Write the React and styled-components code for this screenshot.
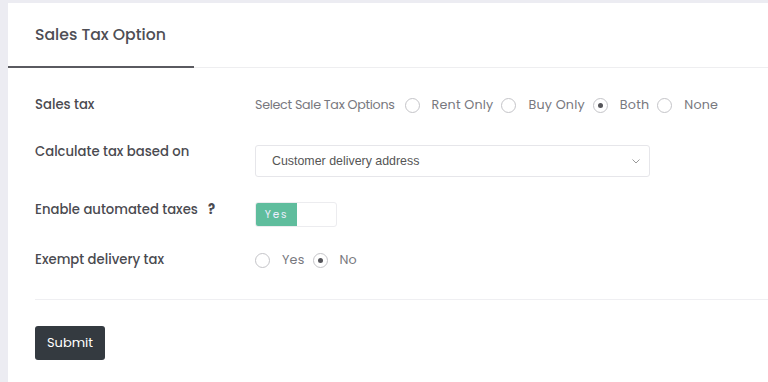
import React from "react";
import styled, { createGlobalStyle } from "styled-components";

const Global = createGlobalStyle`
  html, body { margin: 0; padding: 0; background: #ececf2; }
  body { font-family: "Poppins", "Lato", "Noto Sans", sans-serif; }
  * { box-sizing: border-box; }
`;

const Page = styled.div`
  padding: 3px 0 0 8px;
  height: 382px;
  overflow: hidden;
`;

const Card = styled.div`
  background: #fff;
  height: 379px;
`;

const Header = styled.div`
  height: 65px;
  border-bottom: 1px solid #eeeef0;
  display: flex;
  align-items: flex-end;
`;

const Tab = styled.div`
  width: 186px;
  height: 65px;
  padding-left: 27px;
  display: flex;
  align-items: center;
  border-bottom: 2px solid #5a5a60;
  margin-bottom: -1px;
  font-size: 15.7px;
  font-weight: 500;
  color: #4e4e55;
`;

const Body = styled.div`
  padding: 27px 0 0 27px;
`;

const Row = styled.div`
  display: flex;
  align-items: flex-start;
  margin-bottom: ${(p) => p.$gap}px;
`;

const Label = styled.div`
  width: 220px;
  flex-shrink: 0;
  font-size: 13.2px;
  font-weight: 500;
  line-height: 20px;
  color: #4a4a50;
  display: flex;
  align-items: center;
`;

const Help = styled.span`
  font-weight: 700;
  margin-left: 10px;
  color: #4a4a50;
`;

const Options = styled.div`
  display: flex;
  align-items: center;
  height: 20px;
  font-size: 12.7px;
  letter-spacing: 0.2px;
  color: #78787e;
`;

const Hint = styled.span`
  letter-spacing: -0.3px;
  margin-right: 10px;
`;

const Option = styled.label`
  display: flex;
  align-items: center;
  margin-right: 8px;
`;

const Circle = styled.span`
  width: 15px;
  height: 15px;
  border-radius: 50%;
  border: 1px solid #c4c4c8;
  display: inline-flex;
  align-items: center;
  justify-content: center;
  margin-right: 12px;
  &::after {
    content: "";
    width: 5px;
    height: 5px;
    border-radius: 50%;
    background: ${(p) => (p.$on ? "#55555a" : "transparent")};
  }
`;

const Select = styled.div`
  margin-top: 3px;
  width: 395px;
  height: 32px;
  border: 1px solid #e6e6ea;
  border-radius: 3px;
  display: flex;
  align-items: center;
  justify-content: space-between;
  padding: 0 9px 0 16px;
  font-family: "Liberation Sans", Arial, sans-serif;
  font-size: 12.4px;
  color: #555;
`;

const Toggle = styled.div`
  margin-top: 2px;
  width: 82px;
  height: 25px;
  border: 1px solid #ececef;
  border-radius: 3px;
  display: flex;
  overflow: hidden;
`;

const ToggleOn = styled.div`
  width: 41px;
  background: #5fbd9d;
  color: #eef;
  font-size: 10.5px;
  letter-spacing: 1.8px;
  display: flex;
  align-items: center;
  justify-content: center;
`;

const Divider = styled.div`
  margin-top: 29px;
  border-top: 1px solid #efeff2;
`;

const Submit = styled.button`
  margin-top: 26px;
  width: 70px;
  height: 34px;
  border: none;
  border-radius: 3px;
  background: #343a40;
  color: #fff;
  font-family: inherit;
  font-size: 13px;
  padding: 0;
`;

const Radio = ({ on, children }) => (
  <Option>
    <Circle $on={on} />
    {children}
  </Option>
);

export default function App() {
  return (
    <>
      <Global />
      <Page>
        <Card>
          <Header>
            <Tab>Sales Tax Option</Tab>
          </Header>
          <Body>
            <Row $gap={27}>
              <Label>Sales tax</Label>
              <Options>
                <Hint>Select Sale Tax Options</Hint>
                <Radio>Rent Only</Radio>
                <Radio>Buy Only</Radio>
                <Radio on>Both</Radio>
                <Radio>None</Radio>
              </Options>
            </Row>
            <Row $gap={23}>
              <Label>Calculate tax based on</Label>
              <Select>
                <span>Customer delivery address</span>
                <svg width="8" height="5" viewBox="0 0 8 5">
                  <path d="M0.5 0.5l3.5 3.5 3.5-3.5" fill="none" stroke="#999" strokeWidth="1" />
                </svg>
              </Select>
            </Row>
            <Row $gap={23}>
              <Label>
                Enable automated taxes<Help>?</Help>
              </Label>
              <Toggle>
                <ToggleOn>Yes</ToggleOn>
              </Toggle>
            </Row>
            <Row $gap={0}>
              <Label>Exempt delivery tax</Label>
              <Options>
                <Radio>Yes</Radio>
                <Radio on>No</Radio>
              </Options>
            </Row>
            <Divider />
            <Submit>Submit</Submit>
          </Body>
        </Card>
      </Page>
    </>
  );
}
